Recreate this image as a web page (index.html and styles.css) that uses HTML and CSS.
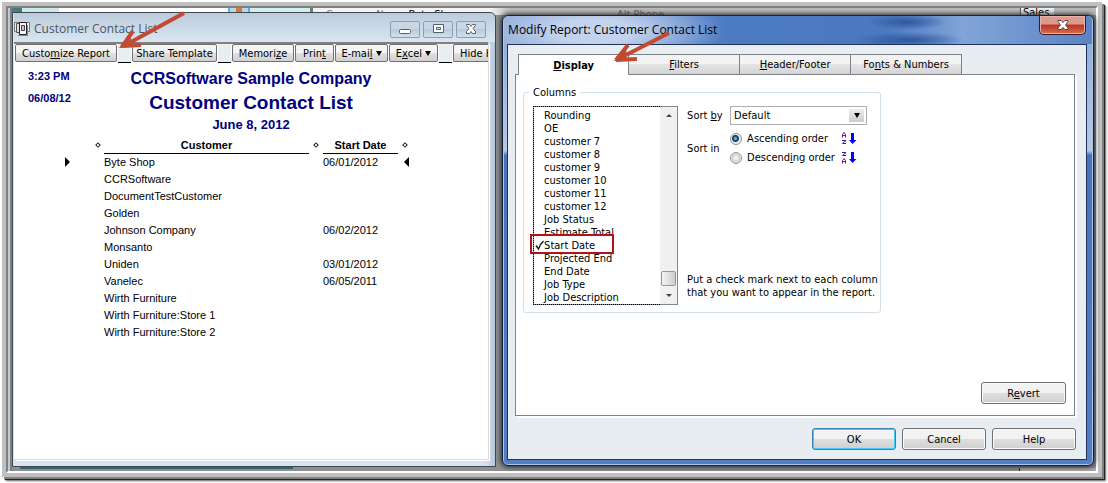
FILE: index.html
```html
<!DOCTYPE html>
<html lang="en">
<head>
<meta charset="utf-8">
<title>Modify Report: Customer Contact List</title>
<link rel="stylesheet" href="styles.css">
</head>
<body>
<div class="frame">
<main class="desktop">
  <div class="backdrop" aria-hidden="true">
    <span class="scrap field-scrap"></span>
    <span class="scrap icon-scrap"></span>
    <span class="scrap name-scrap"></span>
    <span class="scrap name-text">Company Name <b>Byte Shop</b></span>
    <span class="scrap phone-scrap">Alt Phone</span>
    <span class="scrap sales-scrap">Sales</span>
    <span class="scrap teal-scrap"></span>
    <span class="scrap foot-scrap"></span>
  </div>

  <section class="report-window">
    <header class="report-title">
      <svg class="app-icon" width="16" height="16" viewBox="0 0 16 16">
        <path d="M.5 1.500h5v9h-5zM11.500 1.500h4v9h-4z" fill="#eee" stroke="#777"/>
        <path d="M2.500 2.500h3v9h-3z" fill="#ddd" stroke="#555"/>
        <path d="M5.500 1.500h7v12h-7z" fill="#f4f4f4" stroke="#222"/>
        <path d="M7.500 4.500h3v5h-3z" fill="#d8b8dc" stroke="#444"/>
        <path d="M4 14.500h10M13.500 4v10" stroke="#888"/>
      </svg>
      <h2>Customer Contact List</h2>
      <div class="window-buttons">
        <button type="button" aria-label="Minimize"><svg width="14" height="14" viewBox="0 0 14 14"><rect x="1.500" y="7.500" width="11" height="4" rx="1" fill="#fff" stroke="#555e6b"/></svg></button>
        <button type="button" aria-label="Maximize"><svg width="14" height="14" viewBox="0 0 14 14"><path d="M2.500 2.500h10v8h-10z" fill="#fff" stroke="#555e6b"/><path d="M5.500 5.500h4v2h-4z" fill="#dce5ef" stroke="#555e6b"/></svg></button>
        <button type="button" aria-label="Close"><svg width="14" height="14" viewBox="0 0 14 14"><path d="M2.500 2.500h3L7 4.500l1.500-2h3v1L9 6.500l2.500 3v2h-3L7 9.500l-1.500 2h-3v-2L5 6.500l-2.500-3z" fill="#fff" stroke="#555e6b"/></svg></button>
      </div>
    </header>
    <div class="report-client">
      <div class="toolbar">
        <button type="button" class="w-customize">Custo<u>m</u>ize Report</button><i></i>
        <button type="button" class="w-share">Share Template</button><i></i>
        <button type="button" class="w-memorize">Memori<u>z</u>e</button>
        <button type="button" class="w-print">Prin<u>t</u></button>
        <button type="button" class="w-email">E-mai<u>l</u> <span class="caret"></span></button>
        <button type="button" class="w-excel">E<u>x</u>cel <span class="caret"></span></button><i></i>
        <button type="button" class="w-hide">Hide H</button>
      </div>
      <div class="report-head">
        <div class="stamp"><time>3:23 PM</time><time>06/08/12</time></div>
        <div class="titles">
          <p class="company">CCRSoftware Sample Company</p>
          <h1>Customer Contact List</h1>
          <p class="as-of">June 8, 2012</p>
        </div>
      </div>
      <table class="report-table">
        <colgroup><col class="c-lead"><col class="c-name"><col class="c-gap"><col class="c-date"><col class="c-gap"></colgroup>
        <thead><tr>
          <td class="lead"><span class="grip"></span></td><th scope="col">Customer</th>
          <td class="mid"><span class="grip"></span></td><th scope="col">Start Date</th>
          <td class="mid"><span class="grip"></span></td>
        </tr></thead>
        <tbody>
          <tr><td><span class="row-start"></span></td><td>Byte Shop</td><td></td><td>06/01/2012</td><td class="end"><span class="row-end"></span></td></tr>
          <tr><td></td><td>CCRSoftware</td><td></td><td></td><td></td></tr>
          <tr><td></td><td>DocumentTestCustomer</td><td></td><td></td><td></td></tr>
          <tr><td></td><td>Golden</td><td></td><td></td><td></td></tr>
          <tr><td></td><td>Johnson Company</td><td></td><td>06/02/2012</td><td></td></tr>
          <tr><td></td><td>Monsanto</td><td></td><td></td><td></td></tr>
          <tr><td></td><td>Uniden</td><td></td><td>03/01/2012</td><td></td></tr>
          <tr><td></td><td>Vanelec</td><td></td><td>06/05/2011</td><td></td></tr>
          <tr><td></td><td>Wirth Furniture</td><td></td><td></td><td></td></tr>
          <tr><td></td><td>Wirth Furniture:Store 1</td><td></td><td></td><td></td></tr>
          <tr><td></td><td>Wirth Furniture:Store 2</td><td></td><td></td><td></td></tr>
        </tbody>
      </table>
    </div>
    <svg class="arrow arrow-report" width="70" height="40" viewBox="0 0 70 40"><path d="M67 2L14 31" stroke="#c24a32" stroke-width="4"/><path d="M5 36L16 20M4 35L24 34" stroke="#c24a32" stroke-width="4"/><path d="M2 37L13 22L15 36Z" fill="#c24a32"/></svg>
  </section>

  <section class="dialog">
    <header class="dialog-title">
      <h2>Modify Report: Customer Contact List</h2>
      <button type="button" class="dialog-close" aria-label="Close"><svg width="14" height="12" viewBox="0 0 14 12"><path d="M2 1.500h3l2 2 2-2h3v1L9.500 6l2.500 3v1.500H9l-2-2-2 2H2V9l2.500-3L2 2.500z" fill="#fff" stroke="#5c4447"/></svg></button>
    </header>
    <div class="dialog-client">
      <nav class="tabs" role="tablist">
        <button type="button" role="tab" aria-selected="true" class="active"><u>D</u>isplay</button>
        <button type="button" role="tab" aria-selected="false"><u>F</u>ilters</button>
        <button type="button" role="tab" aria-selected="false"><u>H</u>eader/Footer</button>
        <button type="button" role="tab" aria-selected="false">Fo<u>n</u>ts &amp; Numbers</button>
      </nav>
      <div class="panel">
        <fieldset>
          <legend>Columns</legend>
          <div class="group">
            <div class="listbox">
              <div class="items">
                <label><input type="checkbox">Rounding</label>
                <label><input type="checkbox">OE</label>
                <label><input type="checkbox">customer 7</label>
                <label><input type="checkbox">customer 8</label>
                <label><input type="checkbox">customer 9</label>
                <label><input type="checkbox">customer 10</label>
                <label><input type="checkbox">customer 11</label>
                <label><input type="checkbox">customer 12</label>
                <label><input type="checkbox">Job Status</label>
                <label><input type="checkbox">Estimate Total</label>
                <label class="marked"><input type="checkbox" checked><svg width="10" height="10" viewBox="0 0 10 10"><path d="M1 5.500L3.500 9Q5 4 8.500 1" fill="none" stroke="#111" stroke-width="1.400"/></svg>Start Date</label>
                <label><input type="checkbox">Projected End</label>
                <label><input type="checkbox">End Date</label>
                <label><input type="checkbox">Job Type</label>
                <label><input type="checkbox">Job Description</label>
              </div>
              <div class="scrollbar">
                <button type="button" aria-label="Scroll up"><span class="up"></span></button>
                <span class="track"></span>
                <span class="thumb"></span>
                <button type="button" aria-label="Scroll down"><span class="down"></span></button>
              </div>
            </div>
            <div class="sorting">
              <div class="sort-by">
                <label for="sort-by">Sort <u>b</u>y</label>
                <span class="select-wrap"><select id="sort-by"><option>Default</option></select><span class="drop"><span class="caret"></span></span></span>
              </div>
              <div class="sort-in">
                <span id="sort-in">Sort in</span>
                <div class="orders" role="radiogroup" aria-labelledby="sort-in">
                  <div><label><input type="radio" name="order" checked><span>Ascendin<u>g</u> order</span></label>
                    <svg width="15" height="13" viewBox="0 0 15 13"><path d="M.5 5.500V2.500L2 .5l1.500 2v3M.5 3.500h3" stroke="#808" fill="none"/><path d="M0 8.500h4L.5 11.500H4" stroke="#22c" fill="none"/><path d="M9 1h3v7h2.500L10.500 12 7 8h2z" fill="#00f"/></svg></div>
                  <div><label><input type="radio" name="order"><span>Descend<u>i</u>ng order</span></label>
                    <svg width="15" height="13" viewBox="0 0 15 13"><path d="M.5 12.500V9.500L2 7.500l1.500 2v3M.5 10.500h3" stroke="#808" fill="none"/><path d="M0 1.500h4L.5 4.500H4" stroke="#22c" fill="none"/><path d="M9 1h3v7h2.500L10.500 12 7 8h2z" fill="#00f"/></svg></div>
                </div>
              </div>
              <p class="hint">Put a check mark next to each column<br>that you want to appear in the report.</p>
            </div>
          </div>
        </fieldset>
        <button type="button" class="push revert">R<u>e</u>vert</button>
      </div>
      <footer class="actions">
        <button type="button" class="push default">OK</button>
        <button type="button" class="push">Cancel</button>
        <button type="button" class="push">Help</button>
      </footer>
    </div>
    <svg class="arrow arrow-dialog" width="60" height="34" viewBox="0 0 60 34"><path d="M57 3L14 25" stroke="#c24a32" stroke-width="4"/><path d="M4 30L16 15M4 30L25 29" stroke="#c24a32" stroke-width="4"/><path d="M2 31L14 17L15 31Z" fill="#c24a32"/></svg>
  </section>
</main>
</div>
</body>
</html>
```
FILE: styles.css
```css
* { box-sizing: border-box; }
body {
  margin: 0;
  min-height: 100vh;
  display: flex;
  padding: 2px 6px 6px 2px;
  background: #fff;
  color: #000;
  font: 11px/13px "DejaVu Sans Condensed", "DejaVu Sans", sans-serif;
}
h1, h2, p { margin: 0; }
button, select, input { font: inherit; color: inherit; margin: 0; }

.frame {
  flex: 1;
  min-width: 0;
  display: flex;
  border: 4px solid #c0c0c0;
  box-shadow: 2px 2px 0 #808080, 3px 3px 1px #222, 4px 4px 2px #777;
}
.desktop {
  position: relative;
  flex: 1;
  min-width: 0;
  display: flex;
  gap: 6px;
  padding: 4px 2px 4px 4px;
  border: 2px solid #808080;
  border-right-color: #fff;
  border-bottom-color: #fff;
  background: linear-gradient(90deg, #bccbd6 0 2px, #808080 2px 4px, #8d8f93 4px);
}

/* Application partly visible behind both windows */
.backdrop { position: absolute; inset: 0; }
.scrap { position: absolute; top: 0; height: 4px; white-space: nowrap; }
.field-scrap { left: 4px; width: 216px; background: #fff; border-left: 10px solid #487b7c; box-shadow: inset 37px 0 #cfe8e8; }
.icon-scrap { left: 220px; width: 22px; background: linear-gradient(90deg, #4bb7e0 0 2px, #b8d8e4 2px 8px, #d17a38 8px 14px, #b8d8e4 14px 20px, #4bb7e0 20px); }
.name-scrap { left: 242px; right: 0; height: 7px; background: linear-gradient(90deg, #d3eeee 60px, #777 60px 63px, #f4f4f4 63px 240px, #bbb 260px); }
.name-text { left: 318px; color: #777; }
.name-text b { font-weight: 400; color: #000; }
.phone-scrap { left: 609px; color: #666; }
.sales-scrap { right: 42px; width: 34px; height: 7px; line-height: 9px; padding-left: 2px; background: #eee; border-left: 1px solid #555; }
.teal-scrap { top: auto; bottom: 2px; height: 2px; left: 12px; width: 273px; background: #336767; }
.foot-scrap { top: auto; bottom: 0; right: 0; height: 3px; width: 77px; background: #aaa; border-left: 1px solid #222; }

.report-window {
  position: relative;
  flex: 484 1 0;
  min-width: 0;
  display: flex;
  flex-direction: column;
  padding: 0 7px 7px 1px;
  border: 1px solid #3f474f;
  border-radius: 0 6px 0 0;
  background: linear-gradient(90deg, #d7e3f1 98%, #b6c5d8);
}
.report-title {
  display: flex;
  align-items: center;
  height: 29px;
  margin-right: -7px;
  padding: 3px 9px 0 0;
  gap: 4px;
  border-radius: 0 6px 0 0;
  background: linear-gradient(#bccbdc, #d9e5f2);
}
.report-title h2 { flex: 1; font: 12px/16px "Open Sans", sans-serif; color: #4b5661; }
.window-buttons { display: flex; gap: 3px; }
.window-buttons button {
  display: grid;
  place-items: center;
  width: 30px;
  height: 17px;
  padding: 0;
  border: 1px solid #8e9eb2;
  border-radius: 2px;
  background: linear-gradient(#c8d6e5 50%, #b9cadc 50%, #d2dfed);
}
.report-client {
  flex: 1;
  background: #fff;
  border: solid #808080;
  border-width: 2px 0 0 0;
  box-shadow: 1px 1px #dcdcdc, 2px 2px #fff;
}
.toolbar { display: flex; align-items: flex-start; height: 19px; padding-left: 1px; overflow: hidden; gap: 1px; }
.toolbar button {
  flex: none;
  height: 18px;
  padding: 0;
  white-space: nowrap;
  border: 1px solid #707070;
  border-radius: 2px;
  background: linear-gradient(#f4f4f4 50%, #e1e1e1 50%, #d0d0d0);
}
.toolbar i { flex: none; width: 13px; height: 19px; border-bottom: 1px solid #000; background: #e9eff1; }
.toolbar .w-customize { width: 102px; }
.toolbar .w-share { width: 85px; }
.toolbar .w-memorize { width: 62px; }
.toolbar .w-print { width: 39px; }
.toolbar .w-email { width: 53px; }
.toolbar .w-excel { width: 49px; }
.toolbar .w-hide { flex: 1; padding-left: 6px; text-align: left; border-right: 0; border-radius: 2px 0 0 2px; }
.caret { display: inline-block; border: solid transparent; border-width: 5px 3px 0; border-top-color: #000; vertical-align: 1px; }

.report-head {
  display: grid;
  grid-template-columns: 80px 1fr 80px;
  padding: 5px 0 0;
  font-family: "Liberation Sans", Arial, sans-serif;
  font-weight: 700;
  color: #000080;
}
.stamp { padding: 2px 0 0 14px; }
.stamp time { display: block; line-height: 13px; margin-bottom: 9px; }
.titles { text-align: center; white-space: nowrap; }
.company { font-size: 16px; line-height: 22px; }
.titles h1 { font-size: 19px; line-height: 26px; }
.as-of { font-size: 13px; line-height: 18px; }
.report-table {
  table-layout: fixed;
  width: 350px;
  margin: 4px 0 0 48px;
  border-collapse: collapse;
  font: 11px/17px "Liberation Sans", Arial, sans-serif;
}
.report-table td, .report-table th { padding: 0; height: 17px; }
.report-table th { border-bottom: 1px solid #000; line-height: 15px; height: 15px; }
.report-table thead td { height: 15px; line-height: 15px; text-align: center; }
.report-table thead .lead { text-align: right; padding-right: 4px; }
.c-lead { width: 42px; }
.c-name { width: 205px; }
.c-gap { width: 14px; }
.c-date { width: 75px; }
.grip { display: inline-block; width: 4px; height: 4px; border: 1px solid #222; transform: rotate(45deg); vertical-align: 2px; }
.row-start, .row-end { display: block; width: 0; border: 5px solid transparent; }
.row-start { margin-left: 3px; border-left-color: #000; border-right: 0; }
.row-end { margin-left: 6px; border-right-color: #000; border-left: 0; }

.arrow { position: absolute; z-index: 5; pointer-events: none; }
.arrow-report { left: 104px; top: -2px; }
.arrow-dialog { left: 109px; top: 14px; }

.dialog {
  position: relative;
  flex: 592 1 0;
  min-width: 0;
  display: flex;
  flex-direction: column;
  margin: 3px 0 1px;
  padding: 0 6px 5px 4px;
  border: 1px solid #14233f;
  border-radius: 6px;
  background: linear-gradient(#8ba8d6, #b7c8e4 30%, #4673b9 31%, #527fc4);
  box-shadow: inset 0 0 0 1px #a9c4ea, 0 0 5px 1px #222;
}
.dialog-title {
  display: flex;
  justify-content: space-between;
  align-items: flex-start;
  height: 28px;
  margin: 0 -5px 0 -3px;
  padding: 0 6px 0 4px;
  border-radius: 5px 5px 0 0;
  background:
    radial-gradient(40px 8px at 403px 6px, #2d579f, transparent),
    radial-gradient(56px 8px at 405px 24px, #2d579f, transparent),
    radial-gradient(130px 40px at 90px 15px, #c3d2ed 30%, transparent),
    linear-gradient(90deg, #83a1d1, #4d7bc2 38%, #4b78be 65%, #82a4d8 78%, #5a84c5);
}
.dialog-title h2 { padding-top: 6px; font: 12px/16px "Open Sans", sans-serif; }
.dialog-close {
  display: grid;
  place-items: center;
  width: 47px;
  height: 19px;
  padding: 0;
  border: 1px solid #45161a;
  border-top: 0;
  border-radius: 0 0 5px 5px;
  background: linear-gradient(#dc9a8d 45%, #b93420 50%, #d4705a);
  box-shadow: inset 0 0 0 1px #e7b3aa;
}
.dialog-client {
  flex: 1;
  display: flex;
  flex-direction: column;
  padding: 9px 11px 9px 7px;
  border: 1px solid #20325a;
  background: #e7edf0;
}
.tabs { display: flex; padding-left: 3px; }
.tabs button {
  width: 111px;
  height: 20px;
  padding: 0;
  border: 1px solid #7c828a;
  border-width: 1px 1px 0 0;
  background: linear-gradient(#f3f3f3 50%, #e4e4e4 50%, #d4d4d4);
}
.tabs .active { border-left-width: 1px; height: 21px; margin-bottom: -1px; background: #fff; font-weight: 700; z-index: 1; }
.panel {
  flex: 1;
  display: flex;
  flex-direction: column;
  justify-content: space-between;
  padding: 11px 8px 11px 7px;
  border: 1px solid #7c828a;
  box-shadow: 2px 2px #fff;
  background: #fff;
}
fieldset {
  width: 358px;
  min-width: 0;
  margin: 0;
  padding: 7px 10px 7px 9px;
  border: 1px solid #d3dfe8;
  border-radius: 3px;
}
legend { padding: 0 4px; margin-left: -4px; }
.group { display: flex; gap: 9px; }
.listbox {
  flex: none;
  display: flex;
  width: 145px;
  height: 199px;
  border: 1px solid #828790;
  background: #fff;
}
.items { flex: 1; padding: 2px 0 0 10px; border: 1px dotted #000; border-width: 1px 0 1px 1px; margin: -1px 0 -1px -1px; }
.items label { display: block; position: relative; height: 13px; white-space: nowrap; }
.items input { appearance: none; position: absolute; left: -10px; width: 10px; height: 12px; }
.items svg { position: absolute; left: -9px; top: 1px; z-index: 2; }
.items .marked::before {
  content: "";
  box-sizing: border-box;
  position: absolute;
  left: -14px;
  top: -5px;
  width: 84px;
  height: 20px;
  border: 2px solid #b51218;
  z-index: 1;
}
.scrollbar { width: 17px; display: flex; flex-direction: column; align-items: center; background: #f0f0f0; }
.scrollbar button { height: 17px; width: 17px; padding: 0; border: 0; background: none; display: grid; place-items: center; }
.track { flex: 1; }
.thumb { width: 15px; height: 15px; border: 1px solid #979797; border-radius: 2px; background: linear-gradient(90deg, #f4f4f4, #ccc); margin-bottom: 1px; }
.up, .down { border: 3px solid transparent; }
.up { border-bottom-color: #444; border-top: 0; }
.down { border-top-color: #444; border-bottom: 0; }
.sorting { flex: 1; min-width: 0; display: flex; flex-direction: column; white-space: nowrap; }
.sort-by { display: flex; align-items: center; }
.sort-by > label { width: 43px; }
.select-wrap { position: relative; width: 137px; height: 19px; }
select { appearance: none; width: 100%; height: 100%; padding: 0 20px 0 3px; border: 1px solid #abadb3; border-radius: 0; background: #fff; }
.drop { position: absolute; right: 3px; top: 3px; width: 15px; height: 13px; display: grid; place-items: center; background: linear-gradient(#eee, #ccc); pointer-events: none; }
.sort-in { display: flex; align-items: center; padding-top: 7px; }
.sort-in > span { width: 43px; }
.orders { display: grid; gap: 6px; }
.orders div { display: flex; align-items: center; }
.orders label { width: 112px; display: flex; align-items: center; }
.orders input {
  appearance: none;
  width: 12px;
  height: 12px;
  margin-right: 5px;
  border: 1px solid #8e8f8f;
  border-radius: 50%;
  background: radial-gradient(#eee 2px, #c8c8c8 4px, #fff 5px);
}
.orders input:checked { background: radial-gradient(circle at 45% 45%, #8fd5f3, #16638f 2px, #0d3a5c 3px, #eee 4px); }
.hint { margin-top: auto; padding-bottom: 6px; }
.push {
  width: 84px;
  height: 22px;
  padding: 0;
  border: 1px solid #707070;
  border-radius: 3px;
  background: linear-gradient(#f2f2f2 48%, #dfdfdf 50%, #cfcfcf);
  box-shadow: inset 0 0 0 1px #fafafa;
}
.revert { align-self: flex-end; width: 85px; }
.default { border-color: #3c7fb1; box-shadow: inset 0 0 0 1px #48c8f4; }
.actions { display: flex; justify-content: flex-end; gap: 6px; padding-top: 12px; margin-right: -1px; }
```
